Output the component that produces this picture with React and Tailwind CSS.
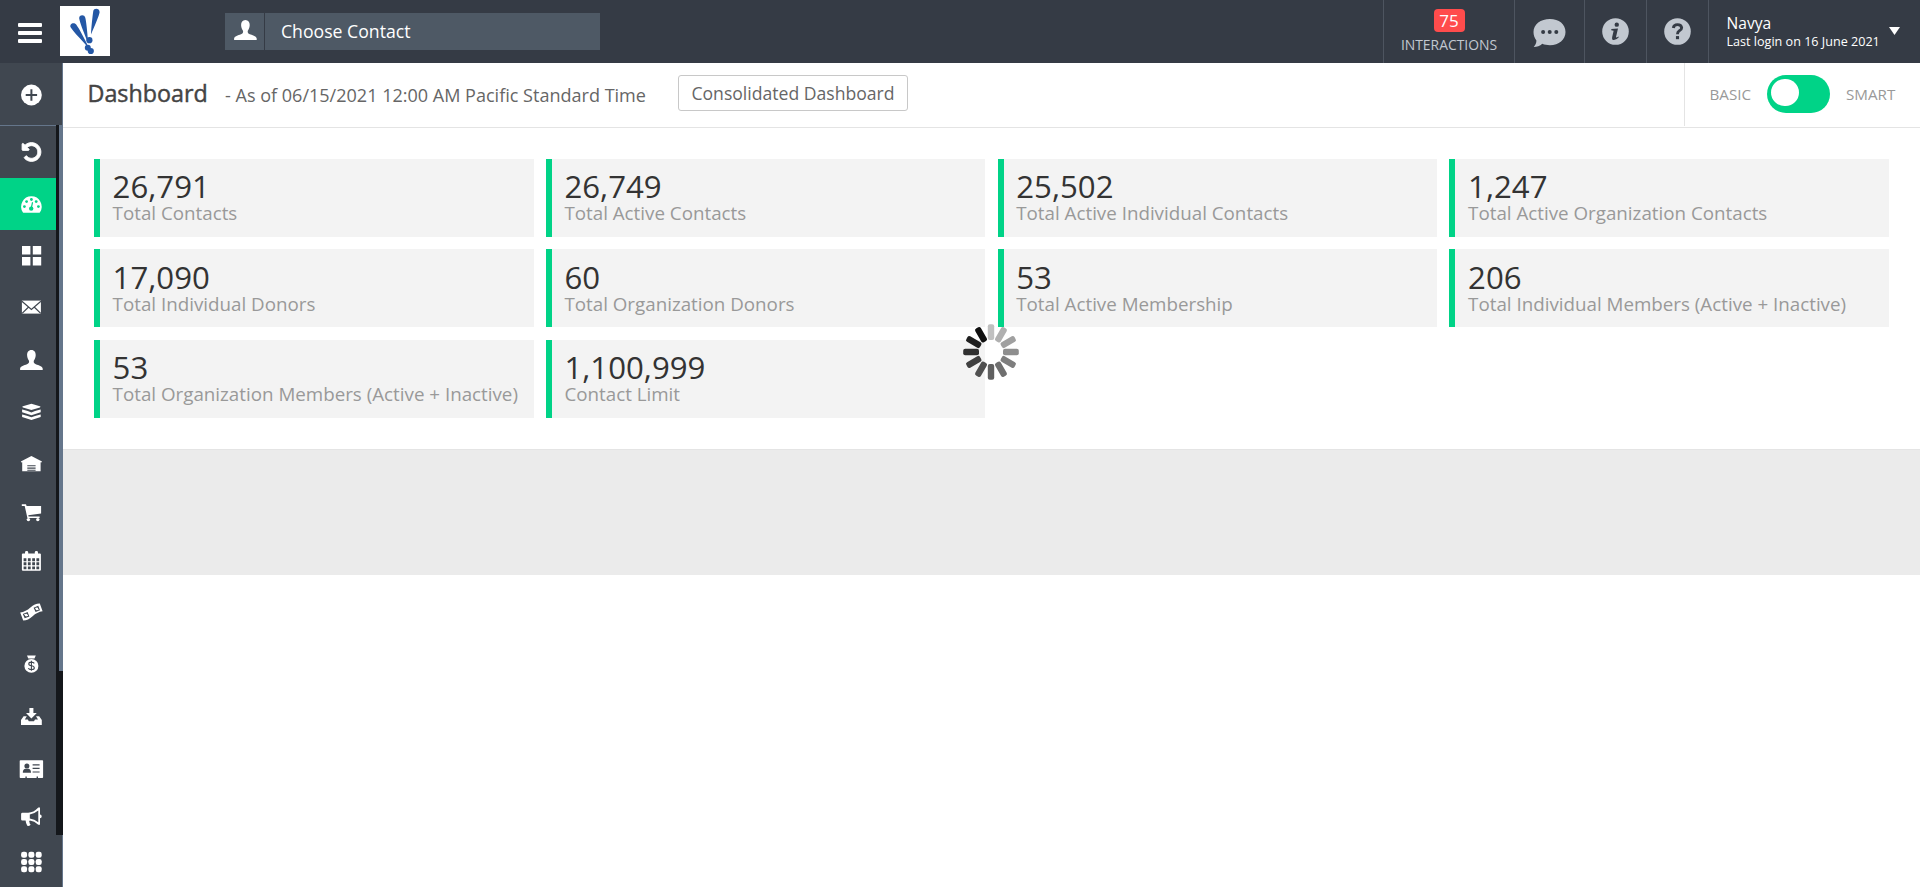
const USER_PATH =
  "M12 2C15 2 16.4 4.3 16.3 7.2C16.2 9.6 15.2 11.6 14.4 12.8C14.1 14.6 14.5 15.4 16.4 16.2C19.4 17.3 23 18 23.3 20.6V22H0.7V20.6C1 18 4.6 17.3 7.6 16.2C9.5 15.4 9.9 14.6 9.6 12.8C8.8 11.6 7.8 9.6 7.7 7.2C7.6 4.3 9 2 12 2Z";

function Icon({ children }) {
  return (
    <svg viewBox="-0.4 0 24 24" className="block size-6 shrink-0 overflow-visible" fill="#fff">
      {children}
    </svg>
  );
}

const UserIcon = () => (
  <Icon>
    <path d={USER_PATH} />
  </Icon>
);

const PlusIcon = () => (
  <Icon>
    <circle cx="12" cy="12" r="10.4" />
    <path d="M12 6.3V17.7M6.3 12H17.7" stroke="#404750" strokeWidth="2" />
  </Icon>
);

const UndoIcon = () => (
  <svg viewBox="-40 0 1792 1792" className="block size-[22px] shrink-0" fill="#fff">
    <path
      stroke="#fff"
      strokeWidth="70"
      d="M1664 896q0 156-61 298t-164 245-245 164-298 61q-172 0-327-72.5t-264-204.5q-7-10-6.5-22.5t8.5-20.5l137-138q10-9 25-9 16 2 23 12 73 95 179 147t225 52q104 0 198.5-40.5t163.5-109.5 109.5-163.5 40.5-198.5-40.5-198.5-109.5-163.5-163.5-109.5-198.5-40.5q-98 0-188 35.5t-160 101.5l137 138q31 30 14 69-17 40-59 40h-448q-26 0-45-19t-19-45v-448q0-42 40-59 39-17 69 14l130 129q107-101 244.5-156.5t284.5-55.5q156 0 298 61t245 164 164 245 61 298z"
    />
  </svg>
);

const GaugeIcon = () => (
  <Icon>
    <g transform="translate(0 0.6)">
      <path d="M12 3.7A10.3 10.3 0 0 1 20.6 19.6Q20.2 20.2 19.5 20.2H4.5Q3.8 20.2 3.4 19.6A10.3 10.3 0 0 1 12 3.7Z" />
      <g fill="#00d387">
        <circle cx="5" cy="14" r="1.4" />
        <circle cx="7.2" cy="9" r="1.4" />
        <circle cx="12" cy="6.9" r="1.4" />
        <circle cx="16.8" cy="9" r="1.4" />
        <circle cx="19" cy="14" r="1.4" />
        <circle cx="11.8" cy="16" r="2.2" />
        <path d="M12.6 9.5L13.7 9.8L12.6 15.5H11.2Z" />
      </g>
    </g>
  </Icon>
);

const SquaresIcon = () => (
  <Icon>
    <path d="M2.6 2.1h8.4v8.4h-8.4zM13.4 2.1h8.4v8.4h-8.4zM2.6 13h8.4v8.4h-8.4zM13.4 13h8.4v8.4h-8.4z" />
  </Icon>
);

const MailIcon = () => (
  <Icon>
    <rect x="2.5" y="5.6" width="19" height="13" />
    <path d="M2.5 6.2L12 14.4L21.5 6.2M2.7 18.4L9.2 12M21.3 18.4L14.8 12" fill="none" stroke="#404750" strokeWidth="1.2" />
  </Icon>
);

const LayersIcon = () => (
  <Icon>
    <path d="M12 3.8L20.5 6.2Q21.8 6.8 20.5 7.4L12 9.9L3.5 7.4Q2.2 6.8 3.5 6.2Z" />
    <path d="M2.7 9.6Q3.6 9.5 12 12.4Q20.4 9.5 21.3 9.6V12.3L12 15.2L2.7 12.3Z" />
    <path d="M2.7 14.4Q3.6 14.3 12 17.2Q20.4 14.3 21.3 14.4V17L12 20L2.7 17Z" />
  </Icon>
);

const WarehouseIcon = () => (
  <Icon>
    <path d="M12 4L22.6 9.4L22 10.6L21.2 10.3V19.2H2.8V10.3L2 10.6L1.4 9.4Z" />
    <path d="M7.9 13.8h8.3M7.9 16.1h8.3M7.9 18.3h8.3" stroke="#404750" strokeWidth="1.1" />
  </Icon>
);

const CartIcon = () => (
  <Icon>
    <path d="M2.4 3.2H6.6L7.2 5H21.7V12.6L8.9 14.2L9.2 15.4H20.2V17H8L5.3 5H2.4Z" />
    <circle cx="9" cy="18.6" r="1.7" />
    <circle cx="18.4" cy="18.6" r="1.7" />
  </Icon>
);

const CalendarIcon = () => (
  <Icon>
    <rect x="2.5" y="4.4" width="19" height="17.4" rx="1" />
    <rect x="5.6" y="2" width="3.2" height="6" rx="1.4" />
    <rect x="15.4" y="2" width="3.2" height="6" rx="1.4" />
    <path
      d="M4.2 9.2h2.8v3h-2.8zM8.5 9.2h2.8v3h-2.8zM12.8 9.2h2.8v3h-2.8zM17 9.2h2.8v3h-2.8zM4.2 13.3h2.8v3h-2.8zM8.5 13.3h2.8v3h-2.8zM12.8 13.3h2.8v3h-2.8zM17 13.3h2.8v3h-2.8zM4.2 17.4h2.8v2.8h-2.8zM8.5 17.4h2.8v2.8h-2.8zM12.8 17.4h2.8v2.8h-2.8zM17 17.4h2.8v2.8h-2.8z"
      fill="#404750"
    />
  </Icon>
);

const MoneyIcon = () => (
  <Icon>
    <path d="M0.8 12.4Q6.4 11.6 11 7.4T20.4 3.4L23.2 11.2Q17.6 12 13.2 16.2T3.8 20.4Z" />
    <path d="M3.4 13.9L8.2 11.9L10 16.4L5.3 18.2ZM14.2 7.8L18.8 5.8L20.6 10.2L16.2 12Z" fill="#404750" />
    <path d="M4.9 14.5L8.6 15.7M15.8 8.2L19.2 9.7" stroke="#fff" strokeWidth="1" />
    <circle cx="6.8" cy="15.1" r="1.3" />
    <circle cx="17.5" cy="8.9" r="1.3" />
  </Icon>
);

const BagIcon = () => (
  <Icon>
    <path d="M7.6 3.4H16.4L15.1 6.6H8.9Z" />
    <ellipse cx="12" cy="13.9" rx="7" ry="6.8" />
    <path
      d="M14.9 11.4Q14.1 10.1 12 10.1Q9.4 10.1 9.4 11.9Q9.4 13.4 12 13.8Q14.9 14.2 14.9 15.9Q14.9 17.6 12 17.6Q9.7 17.6 8.9 16.2M12 8.8V18.8"
      fill="none"
      stroke="#404750"
      strokeWidth="1.1"
    />
  </Icon>
);

const InboxIcon = () => (
  <Icon>
    <path d="M10 4H14V9H17.4L12 14.4L6.6 9H10Z" />
    <path d="M4.2 12.2H7.4L5.4 15.4H8.4L9.4 17.2H14.6L15.6 15.4H18.6L16.6 12.2H19.8L22.4 16V21H1.6V16Z" />
  </Icon>
);

const CardIcon = () => (
  <Icon>
    <path d="M1.1 3.3H22.9Q23.7 3.3 23.7 4.1V20.2Q23.7 21 22.9 21H18.6V19.6H17.2V21H7.4V19.6H6V21H1.1Q0.3 21 0.3 20.2V4.1Q0.3 3.3 1.1 3.3Z" />
    <g fill="#404750">
      <circle cx="7.5" cy="9" r="2.5" />
      <path d="M3.4 15.8Q3.4 12.4 5.8 11.8H9.2Q11.6 12.4 11.6 15.8Z" />
      <path d="M13.2 7.2h7v1.2h-7zM13.2 10.8h7v1.2h-7zM13.2 14.4h7v1.2h-7z" />
    </g>
  </Icon>
);

const BullhornIcon = () => (
  <Icon>
    <path
      transform="translate(0 1)"
      fillRule="evenodd"
      d="M20.6 2.6V9.6Q22.3 9.9 22.3 11.4T20.6 13.2V19.8H18.9Q15 16 10.4 15.5Q9.2 16.3 10.2 17.5Q9.8 18.6 11.2 19.6Q10.8 21.2 7.9 20.8Q6.4 18.2 6.2 15.4H3Q1.7 15.4 1.7 14.2V9.2Q1.7 7.8 3 7.8H8.8Q14 7.8 18.9 2.6ZM18.9 5.6Q15 8.9 10.4 9.4V13.6Q15 14.2 18.9 17.2Z"
    />
  </Icon>
);

const GridIcon = () => (
  <Icon>
    {[1.7, 9, 16.3].map((y) =>
      [1.7, 9, 16.3].map((x) => <rect key={`${x}-${y}`} x={x} y={y} width="6" height="6" rx="2.2" />)
    )}
  </Icon>
);

const NAV = [
  { name: "undo", icon: UndoIcon, cls: "h-[52px]" },
  { name: "dashboard", icon: GaugeIcon, cls: "h-[52px] bg-[#00d387]" },
  { name: "widgets", icon: SquaresIcon, cls: "h-[51px]" },
  { name: "mail", icon: MailIcon, cls: "h-[52px]" },
  { name: "contacts", icon: UserIcon, cls: "h-[54px]" },
  { name: "layers", icon: LayersIcon, cls: "h-[50px]" },
  { name: "warehouse", icon: WarehouseIcon, cls: "h-[54px]" },
  { name: "cart", icon: CartIcon, cls: "h-[44px]" },
  { name: "calendar", icon: CalendarIcon, cls: "h-[52px]" },
  { name: "money", icon: MoneyIcon, cls: "h-[50px]" },
  { name: "fund", icon: BagIcon, cls: "h-[54px]" },
  { name: "import", icon: InboxIcon, cls: "h-[50px]" },
  { name: "card", icon: CardIcon, cls: "h-[56px]" },
  { name: "announce", icon: BullhornIcon, cls: "h-[38px]" },
];

const STATS = [
  ["26,791", "Total Contacts"],
  ["26,749", "Total Active Contacts"],
  ["25,502", "Total Active Individual Contacts"],
  ["1,247", "Total Active Organization Contacts"],
  ["17,090", "Total Individual Donors"],
  ["60", "Total Organization Donors"],
  ["53", "Total Active Membership"],
  ["206", "Total Individual Members (Active + Inactive)"],
  ["53", "Total Organization Members (Active + Inactive)"],
  ["1,100,999", "Contact Limit"],
];

const SPOKES = [
  "#c0c0c0", "#b0b0b0", "#a0a0a0", "#8e8e8e", "#7e7e7e", "#6f6f6f",
  "#606060", "#505050", "#404040", "#303030", "#202020", "#101010",
];

function Logo() {
  return (
    <svg viewBox="0 0 50 50" className="block size-[50px] bg-white" fill="#2457a5">
      <path d="M33.3 5C33.8 1.6 39.8 2 39.6 6.2C39.2 9.6 34.5 20 31 28.5C31.4 20 32.6 10 33.3 5Z" />
      <path d="M19.2 12.6C18.8 8.6 24.6 8.2 25.3 11.8C26.5 17 27.2 26 28 34L26.8 34C23.4 25.5 20 17 19.2 12.6Z" />
      <path d="M10.8 21.6C8.8 18.2 13.6 15.4 16.2 18.4C19.4 23 24 31.5 27.4 38.8L26.4 39.6C20.6 33 13.6 26 10.8 21.6Z" />
      <circle cx="29.4" cy="34.2" r="3.1" />
      <circle cx="27.8" cy="41.8" r="3" />
      <circle cx="30.8" cy="45" r="3.1" />
    </svg>
  );
}

function Header() {
  return (
    <header className="flex h-[63px] shrink-0 bg-[#353b45] text-white">
      <div className="flex w-[60px] flex-col items-center justify-center gap-1 pt-0.5">
        <span className="h-1 w-6 rounded-[1px] bg-white" />
        <span className="h-1 w-6 rounded-[1px] bg-white" />
        <span className="h-1 w-6 rounded-[1px] bg-white" />
      </div>
      <div className="pt-1.5">
        <Logo />
      </div>
      <div className="mt-[13px] ml-[115px] flex h-[37px] w-[375px] gap-px">
        <div className="flex w-[39px] items-center justify-center bg-[#4e5965] pb-1">
          <UserIcon />
        </div>
        <div className="flex flex-1 items-center bg-[#4e5965] pb-px pl-[16px] text-[17.67px] leading-6">Choose Contact</div>
      </div>
      <div className="ml-auto flex">
        <div className="flex w-[131px] flex-col items-center border-l border-[#4e5560] pt-[9px]">
          <span className="flex h-[23px] w-[31px] items-center justify-center rounded-[4px] bg-[#ff4c4c] text-[17px] leading-[22px]">75</span>
          <span className="mt-1 text-[13.9px] leading-[18px] text-[#c2c8d0]">INTERACTIONS</span>
        </div>
        <div className="flex w-[70px] items-center justify-center border-l border-[#4e5560]">
          <svg viewBox="0 0 34 30" className="mt-0.5 block h-[30px] w-[35px]" fill="#c2c8d0">
            <path d="M17.4 1C26.5 1 33 6.2 33 14S26.5 27.2 17.4 27.2C14.6 27.2 12.2 26.8 9.8 25.8C7.4 28 4.4 29 1.2 29C2.8 27 4 24.8 3.9 22.4C2 20.2 1 17.2 1 14C1 6.2 8.3 1 17.4 1Z" />
            <g fill="#353b45">
              <circle cx="10.6" cy="14" r="2" />
              <circle cx="17.2" cy="14" r="2" />
              <circle cx="23.8" cy="14" r="2" />
            </g>
          </svg>
        </div>
        <div className="flex w-[62px] items-center justify-center border-l border-[#4e5560]">
          <svg viewBox="0 0 26 26" className="-mt-px block size-[27px]" fill="#c2c8d0">
            <circle cx="13" cy="13" r="12.8" />
            <g fill="#353b45">
              <circle cx="14.2" cy="6.4" r="2.1" />
              <path d="M9 10.6L15.4 10.1L13.5 18.4Q13.5 19.3 15.9 17.8L16.2 18.6Q13.8 21.4 11.3 21.3Q9.2 21 9.8 18.2L11.2 12.2L8.9 11.7Z" />
            </g>
          </svg>
        </div>
        <div className="flex w-[62px] items-center justify-center border-l border-[#4e5560]">
          <svg viewBox="0 0 26 26" className="-mt-px block size-[27px]" fill="#c2c8d0">
            <circle cx="13" cy="13" r="12.8" />
            <path d="M9 9.6Q9.4 6.4 13 6.4T17 9.4Q17 11.2 14.8 12.3Q13 13.3 13 15.6" fill="none" stroke="#353b45" strokeWidth="2.8" />
            <rect x="11.5" y="17.4" width="3" height="3" fill="#353b45" />
          </svg>
        </div>
        <div className="flex w-[212px] border-l border-[#4e5560] pl-[17.5px]">
          <div className="w-[162px] pt-[13px] whitespace-nowrap">
            <p className="text-[15.6px] leading-5">Navya</p>
            <p className="text-[12.6px] leading-[17px]">Last login on 16 June 2021</p>
          </div>
          <svg viewBox="0 0 10 8" className="mt-[27px] block h-2 w-[11px]" fill="#fff" preserveAspectRatio="none">
            <path d="M0 0H10L5 8Z" />
          </svg>
        </div>
      </div>
    </header>
  );
}

function Sidebar() {
  return (
    <aside className="flex w-[63px] shrink-0 flex-col bg-[#404750]">
      <div className="flex h-[62px] items-center justify-center border-r border-[#65768b] pt-0.5">
        <PlusIcon />
      </div>
      <div className="flex h-[710px]">
        <nav className="w-14 border-t border-[#65768b]">
          {NAV.map(({ name, icon: NavIcon, cls }) => (
            <div key={name} className={`flex items-center justify-center pl-1.5 ${cls}`}>
              <NavIcon />
            </div>
          ))}
        </nav>
        <div className="flex w-[7px] justify-end bg-[#14171b]">
          <div className="h-[546px] w-1 bg-[#65768b]" />
        </div>
      </div>
      <div className="flex flex-1 items-center justify-center border-r border-[#65768b] pt-px">
        <GridIcon />
      </div>
    </aside>
  );
}

function PageBar() {
  return (
    <div className="flex h-[65px] shrink-0 border-b border-[#e4e4e4]">
      <h1 className="mt-[13px] ml-6 w-[134px] pl-[0.5px] text-[23.3px] leading-[34px] font-normal text-[#444] [-webkit-text-stroke:0.45px_#444]">
        Dashboard
      </h1>
      <p className="mt-[19px] ml-[4px] w-[453px] text-[18.05px] leading-[26px] whitespace-nowrap text-[#666]">
        - As of 06/15/2021 12:00 AM Pacific Standard Time
      </p>
      <button className="mt-3 h-9 w-[230px] rounded-[3px] border border-[#c8c8c8] bg-white text-[17.6px] leading-6 text-[#666]">
        Consolidated Dashboard
      </button>
      <div className="ml-auto flex h-[63px] w-[236px] items-center border-l border-[#e4e4e4] text-[15.2px] text-[#999]">
        <span className="ml-[24.5px] w-[57.5px]">BASIC</span>
        <span className="-mt-0.5 flex h-[38px] w-[63px] items-center rounded-full bg-[#00d387] pl-1">
          <span className="-mt-0.5 h-[27px] w-[28px] rounded-full bg-white" />
        </span>
        <span className="ml-4">SMART</span>
      </div>
    </div>
  );
}

function Spinner() {
  return (
    <svg viewBox="-28 -28 56 56" className="absolute top-[324px] left-[963px] size-14">
      {SPOKES.map((color, i) => (
        <rect key={color} x="-3.2" y="-27.8" width="6.4" height="15.8" rx="2" fill={color} transform={`rotate(${i * 30})`} />
      ))}
    </svg>
  );
}

export default function App() {
  return (
    <div className="relative flex h-[887px] w-[1920px] flex-col overflow-hidden bg-white font-['Open_Sans','Noto_Sans',sans-serif]">
      <Header />
      <div className="flex min-h-0 flex-1">
        <Sidebar />
        <main className="flex min-w-0 flex-1 flex-col">
          <PageBar />
          <section className="grid h-[320.5px] shrink-0 auto-rows-[78px] grid-cols-4 content-start gap-x-[12.3px] gap-y-[12.5px] pt-[30.7px] pr-[31px] pl-[31px]">
            {STATS.map(([value, label]) => (
              <div key={label} className="border-l-6 border-[#00d387] bg-[#f3f3f3] pt-[13.5px] pl-[12.6px] whitespace-nowrap">
                <p className="text-[31.2px] leading-[28px] text-[#333]">{value}</p>
                <p className="mt-px text-[18.77px] leading-6 text-[#999]">{label}</p>
              </div>
            ))}
          </section>
          <section className="h-[126.5px] shrink-0 border-t border-[#e4e4e4] bg-[#ebebeb]" />
        </main>
      </div>
      <Spinner />
    </div>
  );
}
